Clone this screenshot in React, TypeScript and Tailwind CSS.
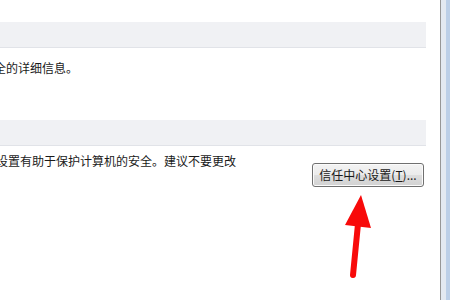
import React from "react";

export default function App() {
  const font = { fontFamily: '"Noto Sans CJK SC", "Noto Sans", sans-serif' };
  return (
    <div
      className="relative w-[450px] h-[300px] overflow-hidden bg-white flex text-[12px] leading-[16px] text-[#1a1a1a]"
      style={font}
    >
      <div className="w-[440px] h-full flex flex-col">
        <div className="h-[22px]" />
        <div className="h-[26px] w-[426px] bg-[#f0f1f4] border-b border-[#e1e3e8]" />
        <div className="mt-[12px] ml-[-6px] whitespace-nowrap">全的详细信息。</div>
        <div className="h-[44px]" />
        <div className="h-[26px] w-[426px] bg-[#f0f1f4] border-b border-[#e1e3e8]" />
        <div className="flex mt-[7px]">
          <div className="ml-[-4px] whitespace-nowrap">设置有助于保护计算机的安全。建议不要更改</div>
          <button
            className="ml-auto mr-[16px] mt-[10px] w-[112px] h-[24px] rounded-[3px] border border-[#707070] bg-[linear-gradient(to_bottom,#f3f3f3_0%,#ebebeb_50%,#dedede_50%,#d2d2d2_100%)] shadow-[inset_0_0_0_1px_#fbfbfb] flex items-center justify-center text-[12px] text-[#1a1a1a] whitespace-nowrap"
            style={font}
          >
            信任中心设置(<span className="underline">T</span>)...
          </button>
        </div>
      </div>
      <div className="w-[1px] h-full bg-[#969696]" />
      <div className="w-[5px] h-full bg-[#e3e9f1]" />
      <div className="w-[4px] h-full bg-[#bccfe7]" />
      <svg className="absolute left-0 top-0" width="450" height="300" viewBox="0 0 450 300">
        <polygon points="361,195 345,225 371,228" fill="#f80a0a" />
        <line x1="358" y1="224" x2="353" y2="275" stroke="#f80a0a" strokeWidth="6" strokeLinecap="round" />
      </svg>
    </div>
  );
}
